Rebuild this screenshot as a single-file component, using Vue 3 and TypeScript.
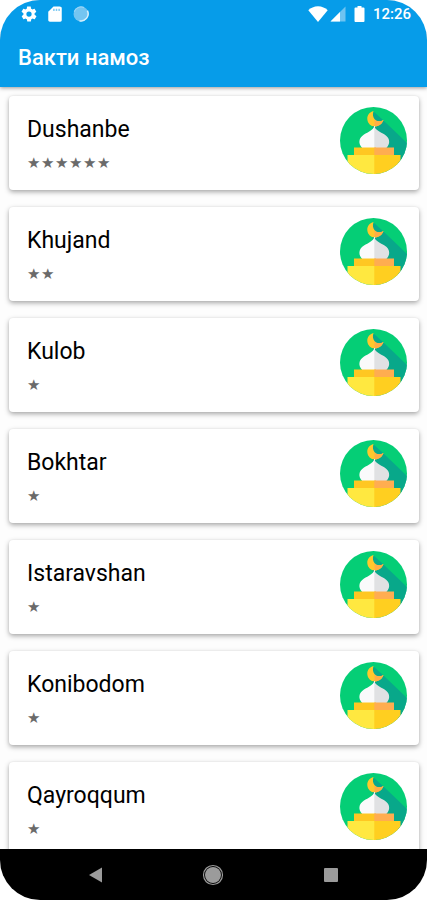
<script setup lang="ts">
interface City {
  name: string
  stars: number
}

const cities: City[] = [
  { name: 'Dushanbe', stars: 6 },
  { name: 'Khujand', stars: 2 },
  { name: 'Kulob', stars: 1 },
  { name: 'Bokhtar', stars: 1 },
  { name: 'Istaravshan', stars: 1 },
  { name: 'Konibodom', stars: 1 },
  { name: 'Qayroqqum', stars: 1 },
]
</script>

<template>
  <div class="screen">
    <header class="top">
      <div class="status">
        <div class="status-group">
          <svg class="icon" viewBox="0 0 24 24" aria-hidden="true">
            <path fill="#fff" d="M19.4 13c0-.3.1-.6.1-1s0-.7-.1-1l2.1-1.600c.2-.2.2-.4.1-.6l-2-3.500c-.1-.2-.4-.3-.6-.2l-2.500 1c-.5-.4-1.100-.7-1.700-1l-.4-2.600c0-.2-.2-.4-.5-.4h-4c-.2 0-.5.2-.5.4l-.4 2.600c-.6.3-1.200.6-1.700 1l-2.500-1c-.2-.1-.5 0-.6.2l-2 3.500c-.1.2-.1.500.1.6L4.600 11c0 .3-.1.700-.1 1s0 .7.1 1l-2.100 1.600c-.2.2-.2.4-.1.6l2 3.500c.1.2.4.3.6.2l2.500-1c.5.4 1.100.7 1.700 1l.4 2.600c0 .2.2.4.5.4h4c.2 0 .5-.2.5-.4l.4-2.600c.6-.3 1.200-.6 1.700-1l2.500 1c.2.1.5 0 .6-.2l2-3.500c.1-.2.1-.5-.1-.6L19.400 13zM12 15.500a3.500 3.500 0 1 1 0-7 3.500 3.500 0 0 1 0 7z" />
          </svg>
          <svg class="icon" viewBox="0 0 24 24" aria-hidden="true">
            <path fill="#fff" d="M18 2H10L3 9V20c0 1.300 1 2.300 2.300 2.300H19c1.300 0 2-1 2-2.300V4.500C21 3 20 2 18 2z" />
            <path fill="#7fcaf3" d="M9.500 5h2v3h-2zM13 5h2v3h-2zM16.500 5h2v3h-2z" />
          </svg>
          <svg class="icon" viewBox="0 0 24 24" aria-hidden="true">
            <circle cx="12" cy="12" r="10" fill="#74c5f1" />
            <path d="M20.500 7.500a9.500 9.500 0 0 1-10.500 13.500" fill="none" stroke="#d6effc" stroke-width="2" />
            <path d="M3 9a9.500 9.500 0 0 1 13-5.500" fill="none" stroke="#98d4f6" stroke-width="1.500" />
          </svg>
        </div>
        <div class="status-group right">
          <svg class="wifi" viewBox="0 0 20 16" aria-hidden="true">
            <path fill="#fff" d="M10 16L.3 4.200C2.600 2 6.200.3 10 .3s7.400 1.700 9.700 3.900z" />
          </svg>
          <svg class="signal" viewBox="0 0 16 16" aria-hidden="true">
            <path fill="#6ec3f1" d="M15.500.5v15H.5z" />
            <path fill="#fff" d="M10 6v9.500H.5z" />
          </svg>
          <svg class="battery" viewBox="0 0 11 16" aria-hidden="true">
            <path fill="#fff" d="M3.500 0h4v1.500H9.500a1 1 0 0 1 1 1V15a1 1 0 0 1-1 1h-8a1 1 0 0 1-1-1V2.500a1 1 0 0 1 1-1h2z" />
          </svg>
          <time class="clock">12:26</time>
        </div>
      </div>
      <h1 class="title">Вакти намоз</h1>
    </header>

    <main class="list">
      <article v-for="city in cities" :key="city.name" class="card">
        <div class="info">
          <h2 class="name">{{ city.name }}</h2>
          <div class="stars">
            <span v-for="n in city.stars" :key="n" class="star">★</span>
          </div>
        </div>
        <svg class="mosque" viewBox="0 0 67 67" aria-hidden="true">
          <defs>
            <clipPath id="disc"><circle cx="33.500" cy="33.500" r="33.500" /></clipPath>
          </defs>
          <g clip-path="url(#disc)">
            <path fill="#05ce76" d="M0 0h67v67H0z" />
            <path fill="#08a88a" d="M33.500 4.500L43 13 67 36v20H56L34 42 32 12z" />
            <path fill="#ffc82c" d="M33.500 4C29.500 5.200 27 8.300 27.300 12.200c.4 4.300 3.700 7.400 7.900 7.200 4-.2 7-2.600 8.300-6.400-3 1.800-6.700 1.700-8.700-.6-2-2.300-2.400-5.400-1.300-8.400z" />
            <path fill="#ffad45" d="M34.500 12c2 2.600 5.500 2.900 9 1-1.300 3.800-4.300 6.200-8.300 6.400h-.7z" />
            <path fill="#fafafb" d="M34.300 19c-1 4-6 6-10.300 8.500-5.500 3.500-6 9-1.800 13.500H35V19z" />
            <path fill="#e0e1e3" d="M34.300 19c1 4 6 6 10.300 8.500 5.500 3.500 6 9 1.800 13.500H34.300z" />
            <path fill="#ffc722" d="M14 40.500h22V49H14z" />
            <path fill="#ffad50" d="M34.300 40.500H54V49H34.300z" />
            <path fill="#ffe840" d="M7.500 48H36v19H7.500z" />
            <path fill="#ffcf20" d="M34.300 48h26.200v19H34.300z" />
          </g>
        </svg>
      </article>
    </main>

    <nav class="nav">
      <button class="nav-button" type="button" aria-label="Back">
        <svg class="nav-icon" viewBox="0 0 22 22" aria-hidden="true">
          <path fill="#9b9b9b" d="M4 11L17 3.500v15z" />
        </svg>
      </button>
      <button class="nav-button" type="button" aria-label="Home">
        <svg class="nav-icon" viewBox="0 0 22 22" aria-hidden="true">
          <circle cx="11" cy="11" r="9.500" fill="none" stroke="#9b9b9b" stroke-width="1.200" />
          <circle cx="11" cy="11" r="8" fill="#9b9b9b" />
        </svg>
      </button>
      <button class="nav-button" type="button" aria-label="Recent apps">
        <svg class="nav-icon" viewBox="0 0 22 22" aria-hidden="true">
          <rect x="4" y="4" width="14" height="14" rx="1" fill="#9b9b9b" />
        </svg>
      </button>
    </nav>
  </div>
</template>

<style>
body {
  background: #fff;
}
</style>

<style scoped>
.screen {
  display: flex;
  flex-direction: column;
  height: 100vh;
  overflow: hidden;
  border-radius: 40px;
  background: #fdfdfd;
  font-family: Roboto, "Noto Sans", sans-serif;
}

.top {
  position: relative;
  flex: none;
  background: #069ce9;
  color: #fff;
  box-shadow: 0 1px 4px rgba(0, 0, 0, 0.4);
}

.status {
  display: flex;
  justify-content: space-between;
  align-items: center;
  height: 28px;
  padding: 0 16px 0 20px;
}

.status-group {
  display: flex;
  align-items: center;
  gap: 8px;
}

.status-group.right {
  gap: 2px;
}

.icon {
  width: 18px;
  height: 18px;
}

.wifi {
  width: 20px;
  height: 16px;
}

.signal {
  width: 16px;
  height: 16px;
}

.battery {
  width: 11px;
  height: 16px;
  margin: 0 6px;
}

.clock {
  font-size: 15px;
  font-weight: 500;
  line-height: 16px;
}

.title {
  margin: 0;
  padding: 17px 18px 16px;
  font-size: 22px;
  font-weight: 500;
  line-height: 26px;
}

.list {
  display: flex;
  flex: 1;
  flex-direction: column;
  gap: 17px;
  min-height: 0;
  overflow: hidden;
  padding: 9px 8px 0 9px;
}

.card {
  display: flex;
  flex: none;
  justify-content: space-between;
  align-items: flex-start;
  box-sizing: border-box;
  min-height: 94px;
  padding: 11px 12px 16px 18px;
  border-radius: 4px;
  background: #fff;
  box-shadow: 0 2px 5px rgba(0, 0, 0, 0.34), 0 0 2px rgba(0, 0, 0, 0.06);
}

.info {
  padding-top: 10px;
}

.name {
  margin: 0;
  color: #000;
  font-size: 23px;
  font-weight: 400;
  line-height: 26px;
}

.stars {
  display: flex;
  margin-top: 11px;
}

.star {
  width: 14px;
  color: #6a6a6a;
  font-family: "DejaVu Sans", sans-serif;
  font-size: 15px;
  line-height: 18px;
}

.mosque {
  flex: none;
  width: 67px;
  height: 67px;
}

.nav {
  display: flex;
  flex: none;
  justify-content: center;
  align-items: center;
  height: 51px;
  background: #000;
}

.nav-button {
  display: flex;
  justify-content: center;
  width: 27.500%;
  padding: 0;
  border: 0;
  background: none;
}

.nav-icon {
  width: 22px;
  height: 22px;
}
</style>
